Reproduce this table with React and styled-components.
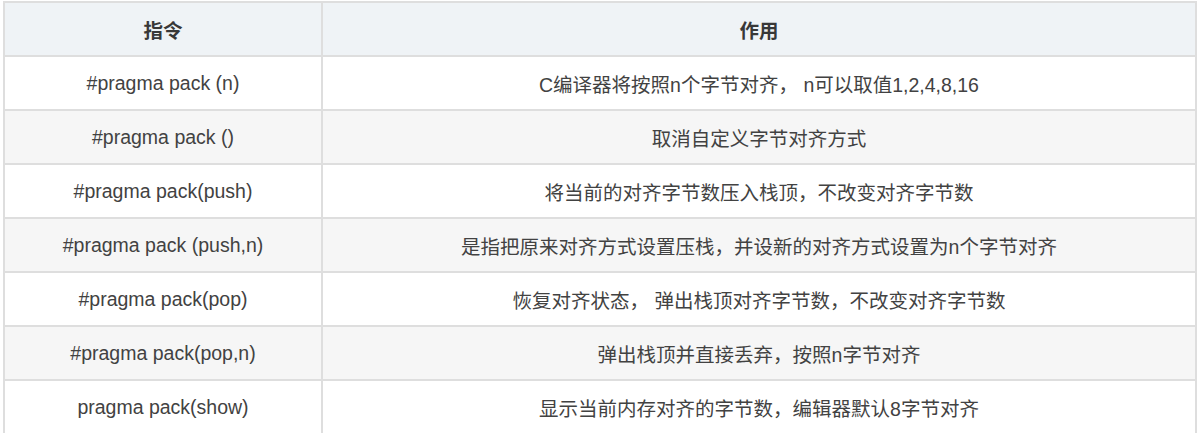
import React from "react";
import styled, { createGlobalStyle } from "styled-components";

const GlobalStyle = createGlobalStyle`
  body {
    margin: 0;
    background: #fff;
    font-family: "Liberation Sans", Arial, "Noto Sans CJK SC", sans-serif;
  }
`;

const Wrap = styled.div`
  padding: 1px 0 0 3px;
`;

const Table = styled.table`
  width: 1194px;
  border-collapse: collapse;
  table-layout: fixed;
  color: #424242;
  font-size: 19.5px;
`;

const HeadCell = styled.th`
  height: 52px;
  padding: 0;
  background: #eff3f6;
  border: 2px solid #dedede;
  font-weight: bold;
  text-align: center;
  color: #383838;
`;

const Row = styled.tr`
  background: ${(p) => (p.$alt ? "#f6f6f6" : "#fff")};
`;

const Cell = styled.td`
  height: 52px;
  padding: 0;
  border: 2px solid #dedede;
  text-align: center;
`;

const rows = [
  ["#pragma pack (n)", "C编译器将按照n个字节对齐， n可以取值1,2,4,8,16"],
  ["#pragma pack ()", "取消自定义字节对齐方式"],
  ["#pragma pack(push)", "将当前的对齐字节数压入栈顶，不改变对齐字节数"],
  ["#pragma pack (push,n)", "是指把原来对齐方式设置压栈，并设新的对齐方式设置为n个字节对齐"],
  ["#pragma pack(pop)", "恢复对齐状态， 弹出栈顶对齐字节数，不改变对齐字节数"],
  ["#pragma pack(pop,n)", "弹出栈顶并直接丢弃，按照n字节对齐"],
  ["pragma pack(show)", "显示当前内存对齐的字节数，编辑器默认8字节对齐"],
];

export default function App() {
  return (
    <Wrap>
      <GlobalStyle />
      <Table>
        <colgroup>
          <col style={{ width: 318 }} />
          <col />
        </colgroup>
        <thead>
          <tr>
            <HeadCell>指令</HeadCell>
            <HeadCell>作用</HeadCell>
          </tr>
        </thead>
        <tbody>
          {rows.map(([cmd, desc], i) => (
            <Row key={cmd} $alt={i % 2 === 1}>
              <Cell>{cmd}</Cell>
              <Cell>{desc}</Cell>
            </Row>
          ))}
        </tbody>
      </Table>
    </Wrap>
  );
}
